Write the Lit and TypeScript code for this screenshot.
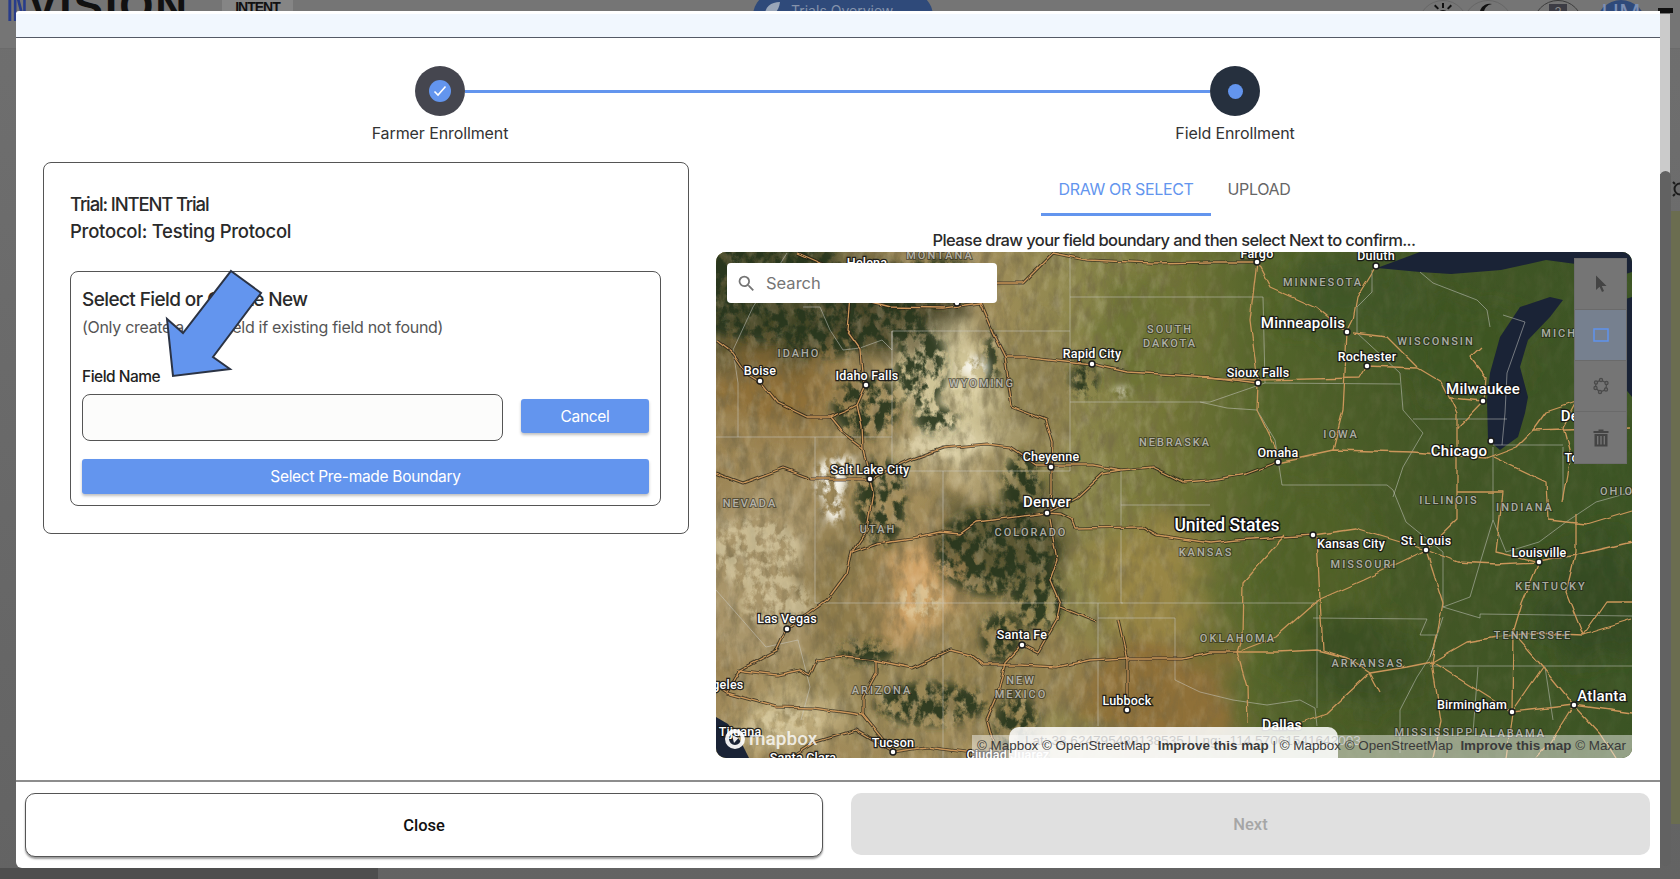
import { LitElement, html, css, svg } from "lit";
import { customElement } from "lit/decorators.js";

type Pt = [number, number];

// everything below is in map pixels, the map is 916 x 506
const cities: [string, number, number, number, number, number?][] = [
  ["Helena", 151, 10, -100, 0],
  ["Boise", 44, 118, 44, 129],
  ["Idaho Falls", 151, 123, 150, 133],
  ["Rapid City", 376, 101, 376, 112],
  ["Cheyenne", 335, 204, 335, 215],
  ["Salt Lake City", 154, 217, 154, 227],
  ["Denver", 331, 250, 331, 261, 15],
  ["Fargo", 541, 1, 541, 10],
  ["Duluth", 660, 3, 660, 14],
  ["Minneapolis", 587, 71, 631, 80, 15],
  ["Rochester", 651, 104, 651, 114],
  ["Sioux Falls", 542, 120, 542, 131],
  ["Milwaukee", 767, 137, 767, 149, 15],
  ["Detroit", 868, 164, -100, 0, 15],
  ["Omaha", 562, 200, 562, 210],
  ["Chicago", 743, 199, 775, 189, 15],
  ["Toledo", 868, 205, -100, 0],
  ["Las Vegas", 71, 366, 71, 377],
  ["Santa Fe", 306, 382, 306, 393],
  ["Los Angeles", -8, 432, -100, 0],
  ["Lubbock", 411, 448, 411, 458],
  ["Tijuana", 24, 479, -100, 0],
  ["Tucson", 177, 490, 177, 500],
  ["Ciudad Juárez", 292, 502, -100, 0],
  ["Santa Clara", 87, 505, -100, 0],
  ["Kansas City", 635, 291, 597, 283],
  ["St. Louis", 710, 288, 710, 298],
  ["Louisville", 823, 300, 823, 310],
  ["Birmingham", 756, 452, 796, 460],
  ["Atlanta", 886, 444, 858, 453, 15],
  ["Dallas", 566, 473, -100, 0, 14],
];

const states: [string, number, number][] = [
  ["MONTANA", 224, 3],
  ["IDAHO", 83, 101],
  ["SOUTH", 454, 77],
  ["DAKOTA", 454, 91],
  ["WYOMING", 266, 131],
  ["NEBRASKA", 459, 190],
  ["NEVADA", 34, 251],
  ["MINNESOTA", 607, 30],
  ["WISCONSIN", 720, 89],
  ["MICHIGAN", 860, 81],
  ["IOWA", 625, 182],
  ["ILLINOIS", 733, 248],
  ["INDIANA", 809, 255],
  ["OHIO", 901, 239],
  ["UTAH", 162, 277],
  ["COLORADO", 315, 280],
  ["ARIZONA", 166, 438],
  ["NEW", 305, 428],
  ["MEXICO", 305, 442],
  ["KANSAS", 490, 300],
  ["MISSOURI", 648, 312],
  ["KENTUCKY", 835, 334],
  ["OKLAHOMA", 522, 386],
  ["TENNESSEE", 817, 383],
  ["ARKANSAS", 652, 411],
  ["MISSISSIPPI", 721, 480],
  ["ALABAMA", 797, 481],
];

const westRoads: Pt[][] = [
  [[0, 88], [17, 101], [31, 121], [44, 129], [62, 151], [91, 165], [114, 165], [131, 158], [141, 153]],
  [[150, 133], [141, 153], [146, 175], [147, 196], [154, 227]],
  [[114, 165], [127, 181], [147, 196]],
  [[154, 227], [167, 221], [194, 208], [227, 196], [271, 192], [294, 195], [321, 213], [377, 213], [404, 218], [437, 215], [467, 230], [494, 228], [530, 222], [562, 210]],
  [[0, 221], [27, 231], [67, 216], [97, 227], [154, 227]],
  [[331, 261], [335, 240], [335, 215], [336, 191], [329, 168], [296, 155], [289, 105], [277, 81], [264, 51]],
  [[264, 51], [227, 56], [174, 55], [134, 45], [131, 78], [144, 96], [146, 121], [150, 133]],
  [[289, 105], [314, 105], [376, 112], [411, 120], [494, 125], [542, 131]],
  [[264, 51], [281, 31], [307, 31], [337, 1], [371, 8], [437, 11], [494, 10], [541, 10]],
  [[81, 1], [104, 11], [134, 20], [134, 45]],
  [[331, 261], [361, 245], [387, 221], [404, 218]],
  [[331, 261], [345, 262], [357, 268], [360, 276], [427, 275], [441, 283], [494, 291], [521, 288], [567, 285], [597, 283]],
  [[136, 300], [161, 291], [197, 286], [224, 280], [244, 282], [261, 270], [331, 261]],
  [[154, 227], [157, 241], [151, 278], [136, 300], [131, 321], [111, 348], [71, 377], [61, 398], [24, 418], [11, 440]],
  [[21, 418], [61, 423], [84, 418], [94, 423], [101, 408], [127, 405], [157, 408], [197, 416], [234, 398], [254, 403], [267, 413], [304, 413], [341, 415], [374, 408], [411, 406], [467, 406], [494, 400], [521, 400]],
  [[0, 434], [11, 441], [61, 455], [97, 456], [147, 463], [177, 500]],
  [[147, 463], [147, 445], [160, 421], [160, 408]],
  [[334, 268], [341, 308], [334, 328], [344, 351], [341, 368], [322, 401], [306, 393], [289, 411], [281, 445], [271, 468], [277, 491]],
  [[344, 355], [381, 370]],
  [[402, 368], [411, 408], [411, 458]],
  [[75, 506], [100, 490], [140, 478], [177, 500], [210, 495], [250, 500]],
];

const eastRoads: Pt[][] = [
  [[660, 14], [641, 45], [637, 68], [631, 80], [629, 121], [627, 158], [617, 198]],
  [[541, 10], [554, 35], [601, 56], [631, 80]],
  [[541, 10], [534, 68], [542, 131], [541, 158], [559, 195], [562, 210]],
  [[484, 125], [542, 128], [644, 126], [651, 114], [701, 116], [726, 131], [741, 161], [741, 201]],
  [[637, 81], [671, 85], [701, 115]],
  [[767, 149], [734, 146]],
  [[741, 176], [767, 149], [769, 125], [754, 105], [765, 95]],
  [[562, 210], [617, 198], [697, 200], [771, 206], [800, 195], [817, 178], [914, 175]],
  [[741, 201], [741, 268], [710, 298]],
  [[597, 283], [640, 277], [710, 298], [741, 310], [780, 312], [823, 310], [860, 303], [916, 290]],
  [[710, 298], [647, 328], [602, 348], [560, 385], [521, 400]],
  [[601, 285], [604, 348], [607, 398], [631, 406]],
  [[569, 283], [527, 330], [526, 385], [521, 400], [531, 435], [532, 471]],
  [[521, 400], [561, 400], [601, 398], [631, 406], [654, 421], [691, 415], [716, 410], [751, 390], [781, 385], [817, 381], [867, 383], [916, 368]],
  [[716, 410], [761, 438], [796, 460]],
  [[727, 351], [716, 410], [725, 470], [717, 506]],
  [[710, 298], [727, 351]],
  [[797, 381], [806, 351], [823, 310]],
  [[797, 381], [796, 460], [790, 506]],
  [[797, 381], [827, 415], [796, 460]],
  [[827, 415], [858, 453]],
  [[796, 460], [858, 453], [916, 461]],
  [[858, 453], [884, 481], [900, 506]],
  [[858, 453], [835, 490], [820, 506]],
  [[654, 421], [611, 461], [584, 471]],
  [[654, 421], [664, 440]],
  [[777, 205], [830, 230], [832, 268], [870, 272], [916, 258]],
  [[741, 240], [787, 240], [780, 300], [823, 310]],
  [[867, 383], [890, 350], [916, 350]],
  [[847, 175], [860, 150], [830, 160], [817, 178]],
  [[847, 250], [855, 205], [847, 175]],
  [[860, 262], [860, 300], [850, 340], [867, 383]],
];

const borders: Pt[][] = [
  [[176, 79], [354, 79], [354, 219], [176, 219], [176, 79]],
  [[0, 185], [176, 185]],
  [[99, 185], [99, 351]],
  [[227, 219], [227, 506]],
  [[99, 351], [407, 351]],
  [[405, 219], [405, 351]],
  [[405, 253], [494, 253]],
  [[354, 150], [494, 150], [549, 131], [684, 132]],
  [[354, 45], [547, 45], [549, 131]],
  [[354, 0], [354, 79]],
  [[71, 1], [37, 55], [17, 98], [22, 131], [22, 185]],
  [[87, 55], [104, 55], [114, 78], [127, 98], [144, 96], [166, 88], [176, 98], [176, 79]],
  [[0, 338], [50, 395], [82, 388], [94, 435], [85, 468]],
  [[382, 351], [382, 474]],
  [[382, 366], [459, 366], [459, 428], [484, 440], [517, 448], [551, 453], [584, 448], [599, 456], [601, 474]],
  [[601, 348], [601, 456]],
  [[405, 351], [601, 351]],
  [[597, 366], [711, 367], [704, 383], [721, 383], [714, 405]],
  [[714, 414], [916, 414]],
  [[727, 355], [764, 366], [764, 362], [916, 364]],
  [[727, 365], [714, 405], [701, 425], [684, 458], [684, 501]],
  [[829, 415], [837, 468]],
  [[762, 415], [757, 481]],
  [[484, 150], [511, 156], [541, 158], [559, 188], [566, 233], [671, 233], [677, 238], [690, 270], [727, 300], [727, 355]],
  [[684, 121], [687, 158], [707, 181], [687, 215], [677, 245]],
  [[697, 167], [791, 167]],
  [[641, 81], [667, 105], [684, 121]],
  [[641, 55], [656, 40], [656, 18]],
  [[641, 55], [641, 81]],
  [[777, 195], [777, 268], [764, 311], [754, 345], [727, 355]],
  [[847, 195], [847, 248]],
  [[777, 193], [847, 193]],
  [[777, 268], [790, 300], [823, 290], [850, 270], [880, 250], [916, 240]],
  [[704, 20], [717, 31], [761, 48], [771, 58], [774, 75]],
  [[787, 63], [809, 70], [791, 121], [789, 161], [786, 193]],
];

const lakes: string[] = [
  "M774 121 L784 85 L804 55 L834 45 L847 48 L834 65 L812 88 L804 115 L812 145 L809 161 L802 185 L784 198 L772 188 L771 148 Z",
  "M661 16 L704 0 L916 0 L916 20 L890 28 L860 12 L830 8 L785 18 L735 22 L704 20 Z",
  "M900 50 L916 45 L916 145 L908 135 L905 90 Z",
  "M0 465 L12 472 L25 490 L33 506 L0 506 Z",
];

const dots: Pt[] = [[241, 51]];

const toPath = (pts: Pt[]) => "M" + pts.map((p) => p.join(" ")).join(" L");

// cx, cy, rx, ry, colour
const softLand: [number, number, number, number, string][] = [
  [60, 45, 110, 70, "#3f4426"],
  [170, 60, 90, 42, "#4b4a2b"],
  [60, 140, 70, 40, "#8f7038"],
  [50, 320, 70, 90, "#a9956a"],
  [150, 340, 70, 70, "#8f7c4c"],
  [200, 335, 36, 50, "#d2a468"],
  [235, 140, 50, 65, "#d0c597"],
  [235, 195, 56, 24, "#d5caa0"],
  [320, 140, 36, 70, "#8f8150"],
  [290, 420, 90, 60, "#95824f"],
  [150, 440, 100, 50, "#9a8856"],
  [290, 290, 70, 50, "#5a5730"],
  [440, 440, 80, 60, "#8f7038"],
  [430, 330, 60, 60, "#988645"],
  [70, 470, 60, 30, "#c2b080"],
  [600, 330, 50, 100, "#4f6028"],
  [430, 80, 50, 60, "#6d7336"],
  [640, 410, 60, 45, "#3b5024"],
  [880, 350, 60, 60, "#354b20"],
  [640, 40, 70, 40, "#415625"],
  [750, 100, 60, 50, "#3e5423"],
];

const forests: [number, number, number, number][] = [
  [50, 35, 85, 55],
  [110, 65, 60, 40],
  [160, 65, 50, 28],
  [215, 30, 60, 24],
  [205, 115, 26, 42],
  [220, 168, 22, 14],
  [276, 108, 8, 28],
  [368, 128, 14, 18],
  [150, 155, 34, 30],
  [165, 250, 26, 44],
  [306, 235, 20, 34],
  [280, 300, 62, 44],
  [322, 345, 26, 34],
  [285, 385, 20, 26],
  [215, 452, 56, 22],
  [150, 400, 28, 12],
  [100, 75, 34, 30],
  [300, 470, 22, 28],
];

const pale: [number, number, number, number][] = [
  [40, 300, 46, 36],
  [60, 350, 36, 26],
  [240, 125, 30, 30],
  [225, 190, 40, 18],
  [205, 350, 24, 20],
  [70, 470, 36, 16],
];

const snow: [number, number, number, number][] = [
  [115, 228, 16, 22],
  [118, 258, 10, 13],
  [130, 212, 9, 8],
  [258, 115, 14, 10],
  [405, 140, 8, 4],
];

@customElement("map-view")
export class MapView extends LitElement {
  static styles = css`
    :host {
      display: block;
      position: relative;
      width: 916px;
      height: 506px;
      border-radius: 10px;
      overflow: hidden;
      background: #5a6a2c;
    }
    .terrain {
      display: block;
      width: 916px;
      height: 506px;
    }
    .border {
      fill: none;
      stroke: rgba(205, 205, 200, 0.5);
      stroke-width: 1;
    }
    .road {
      fill: none;
      stroke: #cb965a;
      stroke-width: 1.3;
      stroke-linejoin: round;
    }
    .casing {
      fill: none;
      stroke: rgba(38, 32, 22, 0.75);
      stroke-width: 3.2;
      stroke-linejoin: round;
    }
    .lake {
      fill: #1a2336;
    }
    .city {
      font: 500 12.5px Roboto, sans-serif;
      fill: #fff;
      stroke: rgba(20, 20, 20, 0.9);
      stroke-width: 2.6px;
      paint-order: stroke;
      text-anchor: middle;
      dominant-baseline: central;
      letter-spacing: 0.2px;
    }
    .state {
      font: 500 11px Roboto, sans-serif;
      fill: rgba(205, 205, 200, 0.8);
      stroke: rgba(30, 30, 25, 0.55);
      stroke-width: 2px;
      paint-order: stroke;
      text-anchor: middle;
      dominant-baseline: central;
      letter-spacing: 2px;
    }
    .country {
      font: 500 17.5px Roboto, sans-serif;
      fill: #fff;
      stroke: #111;
      stroke-width: 3px;
      paint-order: stroke;
      text-anchor: middle;
      dominant-baseline: central;
    }
    .dot {
      fill: #fff;
      stroke: #1c1c1c;
      stroke-width: 1.5;
    }
    .search {
      position: absolute;
      left: 11px;
      top: 11px;
      width: 270px;
      height: 40px;
      box-sizing: border-box;
      padding-left: 9px;
      display: flex;
      align-items: center;
      gap: 9px;
      background: #fff;
      border-radius: 4px;
      font: 400 16.5px Inter, sans-serif;
      color: #757575;
    }
    .tools {
      position: absolute;
      left: 858px;
      top: 6px;
      width: 53px;
      display: flex;
      flex-direction: column;
      background: #757575;
      border: 1px solid #6d6d6d;
      box-sizing: border-box;
    }
    .tool {
      height: 51px;
      box-sizing: border-box;
      display: flex;
      align-items: center;
      justify-content: center;
      border-bottom: 1px solid #6a6a6a;
    }
    .tool:last-child {
      border-bottom: 0;
    }
    .tool.active {
      background: #76808f;
    }
    .logo {
      position: absolute;
      left: 8px;
      top: 476px;
      display: flex;
      align-items: center;
      gap: 3px;
      font: 500 19px Roboto, sans-serif;
      color: rgba(255, 255, 255, 0.8);
      line-height: 20px;
    }
    .coords {
      position: absolute;
      left: 293px;
      top: 475px;
      width: 329px;
      height: 31px;
      box-sizing: border-box;
      padding: 6px 0 0 16px;
      background: rgba(255, 255, 255, 0.86);
      border-radius: 10px 10px 0 0;
      font: 400 13.6px "Liberation Sans", sans-serif;
      color: #a5a5a5;
      white-space: nowrap;
    }
    .attrib {
      position: absolute;
      left: 256px;
      right: 0;
      bottom: 0;
      height: 23px;
      box-sizing: border-box;
      padding: 3px 0 0 5px;
      background: rgba(255, 255, 255, 0.45);
      font: 400 13.42px "Liberation Sans", sans-serif;
      color: #3a3a3a;
      white-space: nowrap;
    }
    .attrib b {
      font-weight: 700;
    }
  `;

  render() {
    return html`
      <svg class="terrain" viewBox="0 0 916 506">
        <defs>
          <linearGradient id="ground" x1="0" x2="1" y1="0" y2="0">
            <stop offset="0" stop-color="#9c8555" />
            <stop offset="0.28" stop-color="#a38e5c" />
            <stop offset="0.4" stop-color="#8c874c" />
            <stop offset="0.5" stop-color="#717436" />
            <stop offset="0.6" stop-color="#53642a" />
            <stop offset="0.78" stop-color="#425625" />
            <stop offset="1" stop-color="#3b5424" />
          </linearGradient>
          <linearGradient id="westFade" x1="0" x2="1" y1="0" y2="0">
            <stop offset="0" stop-color="#fff" />
            <stop offset="0.42" stop-color="#fff" />
            <stop offset="0.62" stop-color="#444" />
            <stop offset="1" stop-color="#333" />
          </linearGradient>
          <mask id="westMask" maskUnits="userSpaceOnUse" x="0" y="0" width="916" height="506">
            <rect width="916" height="506" fill="url(#westFade)" />
          </mask>
          <filter id="soft" x="-20%" y="-20%" width="140%" height="140%">
            <feGaussianBlur stdDeviation="14" result="b" />
            <feTurbulence type="fractalNoise" baseFrequency="0.02" numOctaves="4" seed="5" result="n" />
            <feDisplacementMap in="b" in2="n" scale="50" xChannelSelector="R" yChannelSelector="G" />
          </filter>
          <filter id="patchy" x="-10%" y="-10%" width="120%" height="120%">
            <feGaussianBlur stdDeviation="4" result="b" />
            <feTurbulence type="fractalNoise" baseFrequency="0.1 0.08" numOctaves="6" seed="3" result="n" />
            <feColorMatrix in="n" type="matrix" values="0 0 0 0 0  0 0 0 0 0  0 0 0 0 0  5 0 0 0 -2" result="m" />
            <feComposite in="b" in2="m" operator="in" />
          </filter>
          <filter id="shade" x="0" y="0" width="100%" height="100%">
            <feTurbulence type="fractalNoise" baseFrequency="0.09 0.045" numOctaves="6" seed="9" />
            <feColorMatrix type="matrix" values="0 0 0 0 0.16  0 0 0 0 0.13  0 0 0 0 0.06  2.6 0 0 0 -1.1" />
          </filter>
          <filter id="glint" x="0" y="0" width="100%" height="100%">
            <feTurbulence type="fractalNoise" baseFrequency="0.1 0.05" numOctaves="6" seed="21" />
            <feColorMatrix type="matrix" values="0 0 0 0 0.92  0 0 0 0 0.86  0 0 0 0 0.68  0 2.6 0 0 -1.2" />
          </filter>
          <filter id="wiggle" x="-5%" y="-5%" width="110%" height="110%">
            <feTurbulence type="fractalNoise" baseFrequency="0.05" numOctaves="2" seed="2" result="n" />
            <feDisplacementMap in="SourceGraphic" in2="n" scale="5" xChannelSelector="R" yChannelSelector="G" />
          </filter>
        </defs>

        <rect width="916" height="506" fill="url(#ground)" />
        <g filter="url(#soft)">
          ${softLand.map(
            ([x, y, rx, ry, c]) => svg`<ellipse cx=${x} cy=${y} rx=${rx} ry=${ry} fill=${c} />`
          )}
        </g>
        <g mask="url(#westMask)">
          <rect width="916" height="506" filter="url(#shade)" opacity="0.55" />
          <rect width="916" height="506" filter="url(#glint)" opacity="0.18" />
        </g>
        <g filter="url(#patchy)" fill="#e6dab2" opacity="0.55">
          ${pale.map(
            ([x, y, rx, ry]) => svg`<ellipse cx=${x} cy=${y} rx=${rx} ry=${ry} />`
          )}
        </g>
        <g filter="url(#patchy)" fill="#27341a" opacity="0.9">
          ${forests.map(
            ([x, y, rx, ry]) => svg`<ellipse cx=${x} cy=${y} rx=${rx} ry=${ry} />`
          )}
        </g>
        <g filter="url(#patchy)" fill="#f6f4ea">
          ${snow.map(
            ([x, y, rx, ry]) => svg`<ellipse cx=${x} cy=${y} rx=${rx} ry=${ry} />`
          )}
        </g>

        ${lakes.map((d) => svg`<path class="lake" d=${d} />`)}
        ${borders.map((b) => svg`<path class="border" d=${toPath(b)} />`)}

        <g filter="url(#wiggle)">
          ${westRoads.map((r) => svg`<path class="casing" d=${toPath(r)} />`)}
          ${westRoads.map((r) => svg`<path class="road" d=${toPath(r)} />`)}
          ${eastRoads.map((r) => svg`<path class="road" d=${toPath(r)} />`)}
        </g>

        ${states.map(
          ([t, x, y]) => svg`<text class="state" x=${x} y=${y}>${t}</text>`
        )}
        ${dots.map(([x, y]) => svg`<circle class="dot" cx=${x} cy=${y} r="3" />`)}
        ${cities.map(
          ([t, x, y, dx, dy, size]) => svg`
            <text class="city" x=${x} y=${y} style="font-size:${size ?? 12.5}px">${t}</text>
            <circle class="dot" cx=${dx} cy=${dy} r="3" />
          `
        )}
        <text class="country" x="511" y="273">United States</text>
      </svg>

      <div class="search">
        <svg width="21" height="21" viewBox="0 0 24 24" fill="#757575">
          <path d="M15.5 14h-.79l-.28-.27A6.471 6.471 0 0 0 16 9.5 6.5 6.5 0 1 0 9.5 16c1.61 0 3.09-.59 4.23-1.57l.27.28v.79l5 4.99L20.49 19l-4.99-5zm-6 0C7.01 14 5 11.99 5 9.5S7.01 5 9.5 5 14 7.01 14 9.5 11.99 14 9.5 14z" />
        </svg>
        Search
      </div>

      <div class="tools">
        <div class="tool">
          <svg width="14" height="20" viewBox="0 0 14 20" fill="#444">
            <path d="M2 1.5 L2 16 L5.6 12.8 L8 18 L10 17 L7.8 12 L12.6 12 Z" />
          </svg>
        </div>
        <div class="tool active">
          <svg width="16" height="14" viewBox="0 0 16 14" fill="none" stroke="#5f93ee" stroke-width="1.5">
            <rect x="1" y="1" width="14" height="12" />
          </svg>
        </div>
        <div class="tool">
          <svg width="18" height="18" viewBox="0 0 18 18" fill="none" stroke="#4a4a4a" stroke-width="1.2">
            <path d="M9 3 L14.5 6 L14 12.5 L8 15 L3.5 11 L4 5.5 Z" />
            <g fill="#6c6c6c">
              <circle cx="9" cy="3" r="1.6" />
              <circle cx="14.5" cy="6" r="1.6" />
              <circle cx="14" cy="12.5" r="1.6" />
              <circle cx="8" cy="15" r="1.6" />
              <circle cx="3.5" cy="11" r="1.6" />
              <circle cx="4" cy="5.5" r="1.6" />
            </g>
          </svg>
        </div>
        <div class="tool">
          <svg width="16" height="18" viewBox="0 0 16 18" fill="#444">
            <path d="M5.5 0.5 H10.5 V2 H15.5 V4 H0.5 V2 H5.5 Z" />
            <path d="M1.5 5 H14.5 V17.5 H1.5 Z M4 7 V15.5 H5.4 V7 Z M7.3 7 V15.5 H8.7 V7 Z M10.6 7 V15.5 H12 V7 Z" fill-rule="evenodd" />
          </svg>
        </div>
      </div>

      <div class="logo">
        <svg width="22" height="22" viewBox="0 0 22 22">
          <circle cx="11" cy="11" r="8" fill="none" stroke="rgba(255,255,255,0.92)" stroke-width="4" />
          <path d="M8 7 L14.5 10 L10 15 Z" fill="rgba(255,255,255,0.92)" />
        </svg>
        mapbox
      </div>
      <div class="coords">Lat: 38.624795489138535 | Lng: -114.57061541642003</div>
      <div class="attrib">
        © Mapbox © OpenStreetMap &nbsp;<b>Improve this map</b> | © Mapbox © OpenStreetMap &nbsp;<b>Improve this map</b> © Maxar
      </div>
    `;
  }
}

@customElement("app-root")
export class AppRoot extends LitElement {
  static styles = css`
    :host {
      display: block;
      position: relative;
      width: 1680px;
      height: 879px;
      overflow: hidden;
      background: linear-gradient(#6f6f6f, #636363);
      font-family: Inter, "Liberation Sans", sans-serif;
      color: #222;
    }

    /* the app behind the dialog, only its lower edge shows */
    .topbar {
      display: flex;
      height: 48px;
      background: #757575;
      border-bottom: 1px solid #6b6b6b;
      overflow: hidden;
    }
    .brand {
      display: flex;
      flex: none;
      width: 222px;
      box-sizing: border-box;
      padding-left: 7px;
      margin-top: -16px;
      font: 700 44px "Liberation Sans", sans-serif;
      line-height: 44px;
      letter-spacing: 2px;
      color: #111;
    }
    .brand span {
      display: inline-block;
      width: 21px;
      transform: scaleX(0.46);
      transform-origin: left;
      letter-spacing: 0;
      color: #283c8a;
    }
    .chip {
      flex: none;
      width: 71px;
      height: 14px;
      background: #858585;
      font: 700 14px "Liberation Sans", sans-serif;
      line-height: 14px;
      text-align: center;
      letter-spacing: -1px;
      color: #111;
    }
    .pill {
      flex: none;
      display: flex;
      gap: 10px;
      width: 180px;
      height: 48px;
      margin: -8px 0 0 460px;
      padding: 9px 0 0 10px;
      box-sizing: border-box;
      border-radius: 24px;
      background: #2f4a7a;
      color: #8593ab;
      font-size: 14px;
      line-height: 20px;
    }
    .round {
      flex: none;
      width: 50px;
      height: 50px;
      border-radius: 50%;
      border: 1px solid #666;
      box-sizing: border-box;
      display: flex;
      align-items: flex-start;
      justify-content: center;
      padding-top: 1px;
    }
    .round.sun {
      margin-left: 485px;
    }
    .round.moon {
      margin-left: -5px;
    }
    .round.help {
      margin-left: 20px;
      border-color: #3c3c3c;
      padding-top: 3px;
    }
    .round.user {
      margin-left: 13px;
      border: 0;
      background: #2f4a7a;
      color: #7c8fb4;
      font-size: 24px;
      line-height: 26px;
    }
    .qmark {
      width: 18px;
      height: 18px;
      background: #3c3c44;
      color: #8a8a8a;
      font-size: 13px;
      line-height: 16px;
      text-align: center;
    }

    .side {
      position: absolute;
      left: 1671px;
      top: 211px;
      width: 9px;
      height: 613px;
      background: #6b6d50;
    }
    .cap {
      position: absolute;
      left: 1658px;
      top: 8px;
      width: 15px;
      height: 5px;
      background: #111;
    }
    .gear {
      position: absolute;
      left: 1671px;
      top: 180px;
    }
    .track {
      position: absolute;
      left: 1660px;
      top: 14px;
      width: 10px;
      height: 160px;
      background: #cbcbcb;
    }
    .thumb {
      position: absolute;
      left: 1660px;
      top: 171px;
      width: 11px;
      height: 695px;
      border-radius: 6px;
      background: #626262;
    }
    .dim {
      position: absolute;
      left: 0;
      top: 868px;
      width: 378px;
      height: 11px;
      background: #4e4e4e;
    }

    .modal {
      position: absolute;
      left: 16px;
      top: 11px;
      width: 1644px;
      height: 857px;
      box-sizing: border-box;
      display: flex;
      flex-direction: column;
      background: #fff;
      border-top: 3px solid #fff;
      border-radius: 3px 0 0 6px;
    }
    .band {
      height: 23px;
      flex: none;
      background: #f1f7fe;
      border-bottom: 1px solid #555a66;
    }

    .stepper {
      display: flex;
      margin: 28px 345px 0 344px;
    }
    .step {
      width: 160px;
      display: flex;
      flex-direction: column;
      align-items: center;
      gap: 5px;
      font-size: 16px;
      line-height: 24px;
      letter-spacing: -0.1px;
      color: #333;
    }
    .node {
      width: 50px;
      height: 50px;
      border-radius: 50%;
      display: flex;
      align-items: center;
      justify-content: center;
      background: #45464f;
    }
    .node.now {
      background: #26303e;
    }
    .tick {
      width: 22px;
      height: 22px;
      border-radius: 50%;
      background: #6395ee;
      display: flex;
      align-items: center;
      justify-content: center;
    }
    .spot {
      width: 15px;
      height: 15px;
      border-radius: 50%;
      background: #6395ee;
    }
    .line {
      flex: 1;
      height: 3px;
      margin: 23.5px -55px 0;
      background: #6395ee;
    }

    .body {
      display: flex;
      gap: 27px;
      margin: 17px 28px 0 27px;
    }
    .left {
      width: 646px;
      height: 372px;
      flex: none;
      box-sizing: border-box;
      padding: 28px 27px 0 26px;
      border: 1px solid #555;
      border-radius: 8px;
    }
    .title {
      font-size: 18.5px;
      line-height: 27px;
      font-weight: 500;
      color: #2a2a2a;
    }
    .title.trial {
      letter-spacing: -1.15px;
    }
    .title.protocol {
      letter-spacing: -0.25px;
    }
    .inner {
      margin-top: 26px;
      height: 235px;
      box-sizing: border-box;
      padding: 15px 11px 0;
      border: 1px solid #555;
      border-radius: 8px;
    }
    .inner h3 {
      margin: 0;
      font-size: 19px;
      line-height: 26px;
      font-weight: 500;
      letter-spacing: -0.6px;
      color: #2a2a2a;
    }
    .inner p {
      margin: 2px 0 0;
      font-size: 16px;
      line-height: 24px;
      letter-spacing: -0.3px;
      color: #555;
    }
    .inner label {
      display: block;
      margin-top: 27px;
      font-size: 15.5px;
      line-height: 22px;
      font-weight: 500;
      letter-spacing: -0.5px;
      color: #222;
    }
    .row {
      display: flex;
      align-items: center;
      gap: 18px;
      margin-top: 6px;
    }
    .input {
      width: 421px;
      height: 47px;
      box-sizing: border-box;
      border: 1px solid #555;
      border-radius: 8px;
      background: #fcfcfb;
    }
    .btn {
      border: 0;
      border-radius: 3px;
      background: #6395ee;
      color: #fff;
      font: 400 15.5px Inter, sans-serif;
      letter-spacing: -0.3px;
      box-shadow: 0 2px 3px rgba(0, 0, 0, 0.25);
      padding: 0;
    }
    .row .btn {
      width: 128px;
      height: 34px;
      margin-top: -3px;
    }
    .wide {
      display: block;
      width: 567px;
      height: 35px;
      margin-top: 18px;
    }

    .right {
      flex: 1;
      min-width: 0;
    }
    .tabs {
      display: flex;
      justify-content: center;
      height: 54px;
      font-size: 16px;
      letter-spacing: -0.35px;
      color: #666;
    }
    .tab {
      padding: 0 17px;
      line-height: 54px;
      box-sizing: border-box;
    }
    .tab.on {
      padding: 0 17px 0 18px;
      color: #6395ee;
      border-bottom: 3px solid #6395ee;
    }
    .note {
      margin-top: 12px;
      text-align: center;
      font-size: 16.5px;
      line-height: 24px;
      font-weight: 500;
      letter-spacing: -0.6px;
      color: #2a2a2a;
    }

    .foot {
      margin-top: auto;
      height: 88px;
      flex: none;
      box-sizing: border-box;
      display: flex;
      gap: 28px;
      padding: 11px 10px 0 9px;
      border-top: 2px solid #8d8d8d;
    }
    .close,
    .next {
      padding: 0;
      font: 500 16.5px Roboto, sans-serif;
    }
    .close {
      flex: none;
      width: 798px;
      height: 64px;
      background: #fff;
      border: 1px solid #555;
      border-radius: 10px;
      box-shadow: 0 2px 2px rgba(0, 0, 0, 0.4);
      color: #111;
    }
    .next {
      flex: 1;
      height: 62px;
      background: #e0e0e0;
      border: 0;
      border-radius: 10px;
      color: #a6a6a6;
    }

    .pointer {
      position: absolute;
      left: 0;
      top: 0;
      pointer-events: none;
    }
  `;

  render() {
    return html`
      <div class="topbar">
        <div class="brand"><span>IN</span>VISION</div>
        <div class="chip">INTENT</div>
        <div class="pill">
          <svg width="18" height="20" viewBox="0 0 18 20" fill="#9aa6b8">
            <path d="M17 1 C8 1 1 6 2 16 C10 16 16 10 17 1 Z" />
          </svg>
          Trials Overview
        </div>
        <div class="round sun">
          <svg width="24" height="18" viewBox="0 0 24 18" fill="#111">
            <circle cx="12" cy="14" r="6" />
            <path d="M11 1h2v5h-2zM3 4l1.4-1.4L8 6.2 6.6 7.6zM21 4l-1.4-1.4L16 6.2l1.4 1.4z" />
          </svg>
        </div>
        <div class="round moon">
          <svg width="20" height="20" viewBox="0 0 20 20" fill="#111">
            <path d="M14 2 A10 10 0 0 0 6 20 L16 20 A8 8 0 0 1 14 2 Z" />
          </svg>
        </div>
        <div class="round help"><div class="qmark">?</div></div>
        <div class="round user">UM</div>
      </div>
      <div class="side"></div>
      <div class="track"></div>
      <div class="thumb"></div>
      <div class="cap"></div>
      <svg class="gear" width="9" height="18" viewBox="0 0 9 18" fill="none" stroke="#1c1c1c" stroke-width="2">
        <circle cx="9" cy="9" r="5.5" />
        <path d="M2 2 L4 4 M2 16 L4 14" />
      </svg>
      <div class="dim"></div>

      <div class="modal">
        <div class="band"></div>
        <div class="stepper">
          <div class="step">
            <div class="node">
              <div class="tick">
                <svg width="14" height="12" viewBox="0 0 14 12" fill="none" stroke="#fff" stroke-width="1.6">
                  <path d="M1.5 6.5 L5 10 L12.5 1.5" />
                </svg>
              </div>
            </div>
            Farmer Enrollment
          </div>
          <div class="line"></div>
          <div class="step">
            <div class="node now"><div class="spot"></div></div>
            Field Enrollment
          </div>
        </div>

        <div class="body">
          <div class="left">
            <div class="title trial">Trial: INTENT Trial</div>
            <div class="title protocol">Protocol: Testing Protocol</div>
            <div class="inner">
              <h3>Select Field or Create New</h3>
              <p>(Only create a new field if existing field not found)</p>
              <label>Field Name</label>
              <div class="row">
                <div class="input"></div>
                <button class="btn">Cancel</button>
              </div>
              <button class="btn wide">Select Pre-made Boundary</button>
            </div>
          </div>
          <div class="right">
            <div class="tabs">
              <div class="tab on">DRAW OR SELECT</div>
              <div class="tab">UPLOAD</div>
            </div>
            <div class="note">Please draw your field boundary and then select Next to confirm...</div>
            <map-view></map-view>
          </div>
        </div>

        <div class="foot">
          <button class="close">Close</button>
          <button class="next">Next</button>
        </div>
      </div>

      <!-- annotation arrow drawn over the screenshot -->
      <svg class="pointer" width="1680" height="879" viewBox="0 0 1680 879">
        <path
          d="M231 271 L261 293 L213 357 L230 369 L173 376 L167 319 L183 333 Z"
          fill="#6395ee"
          stroke="#2b3344"
          stroke-width="2"
        />
      </svg>
    `;
  }
}
